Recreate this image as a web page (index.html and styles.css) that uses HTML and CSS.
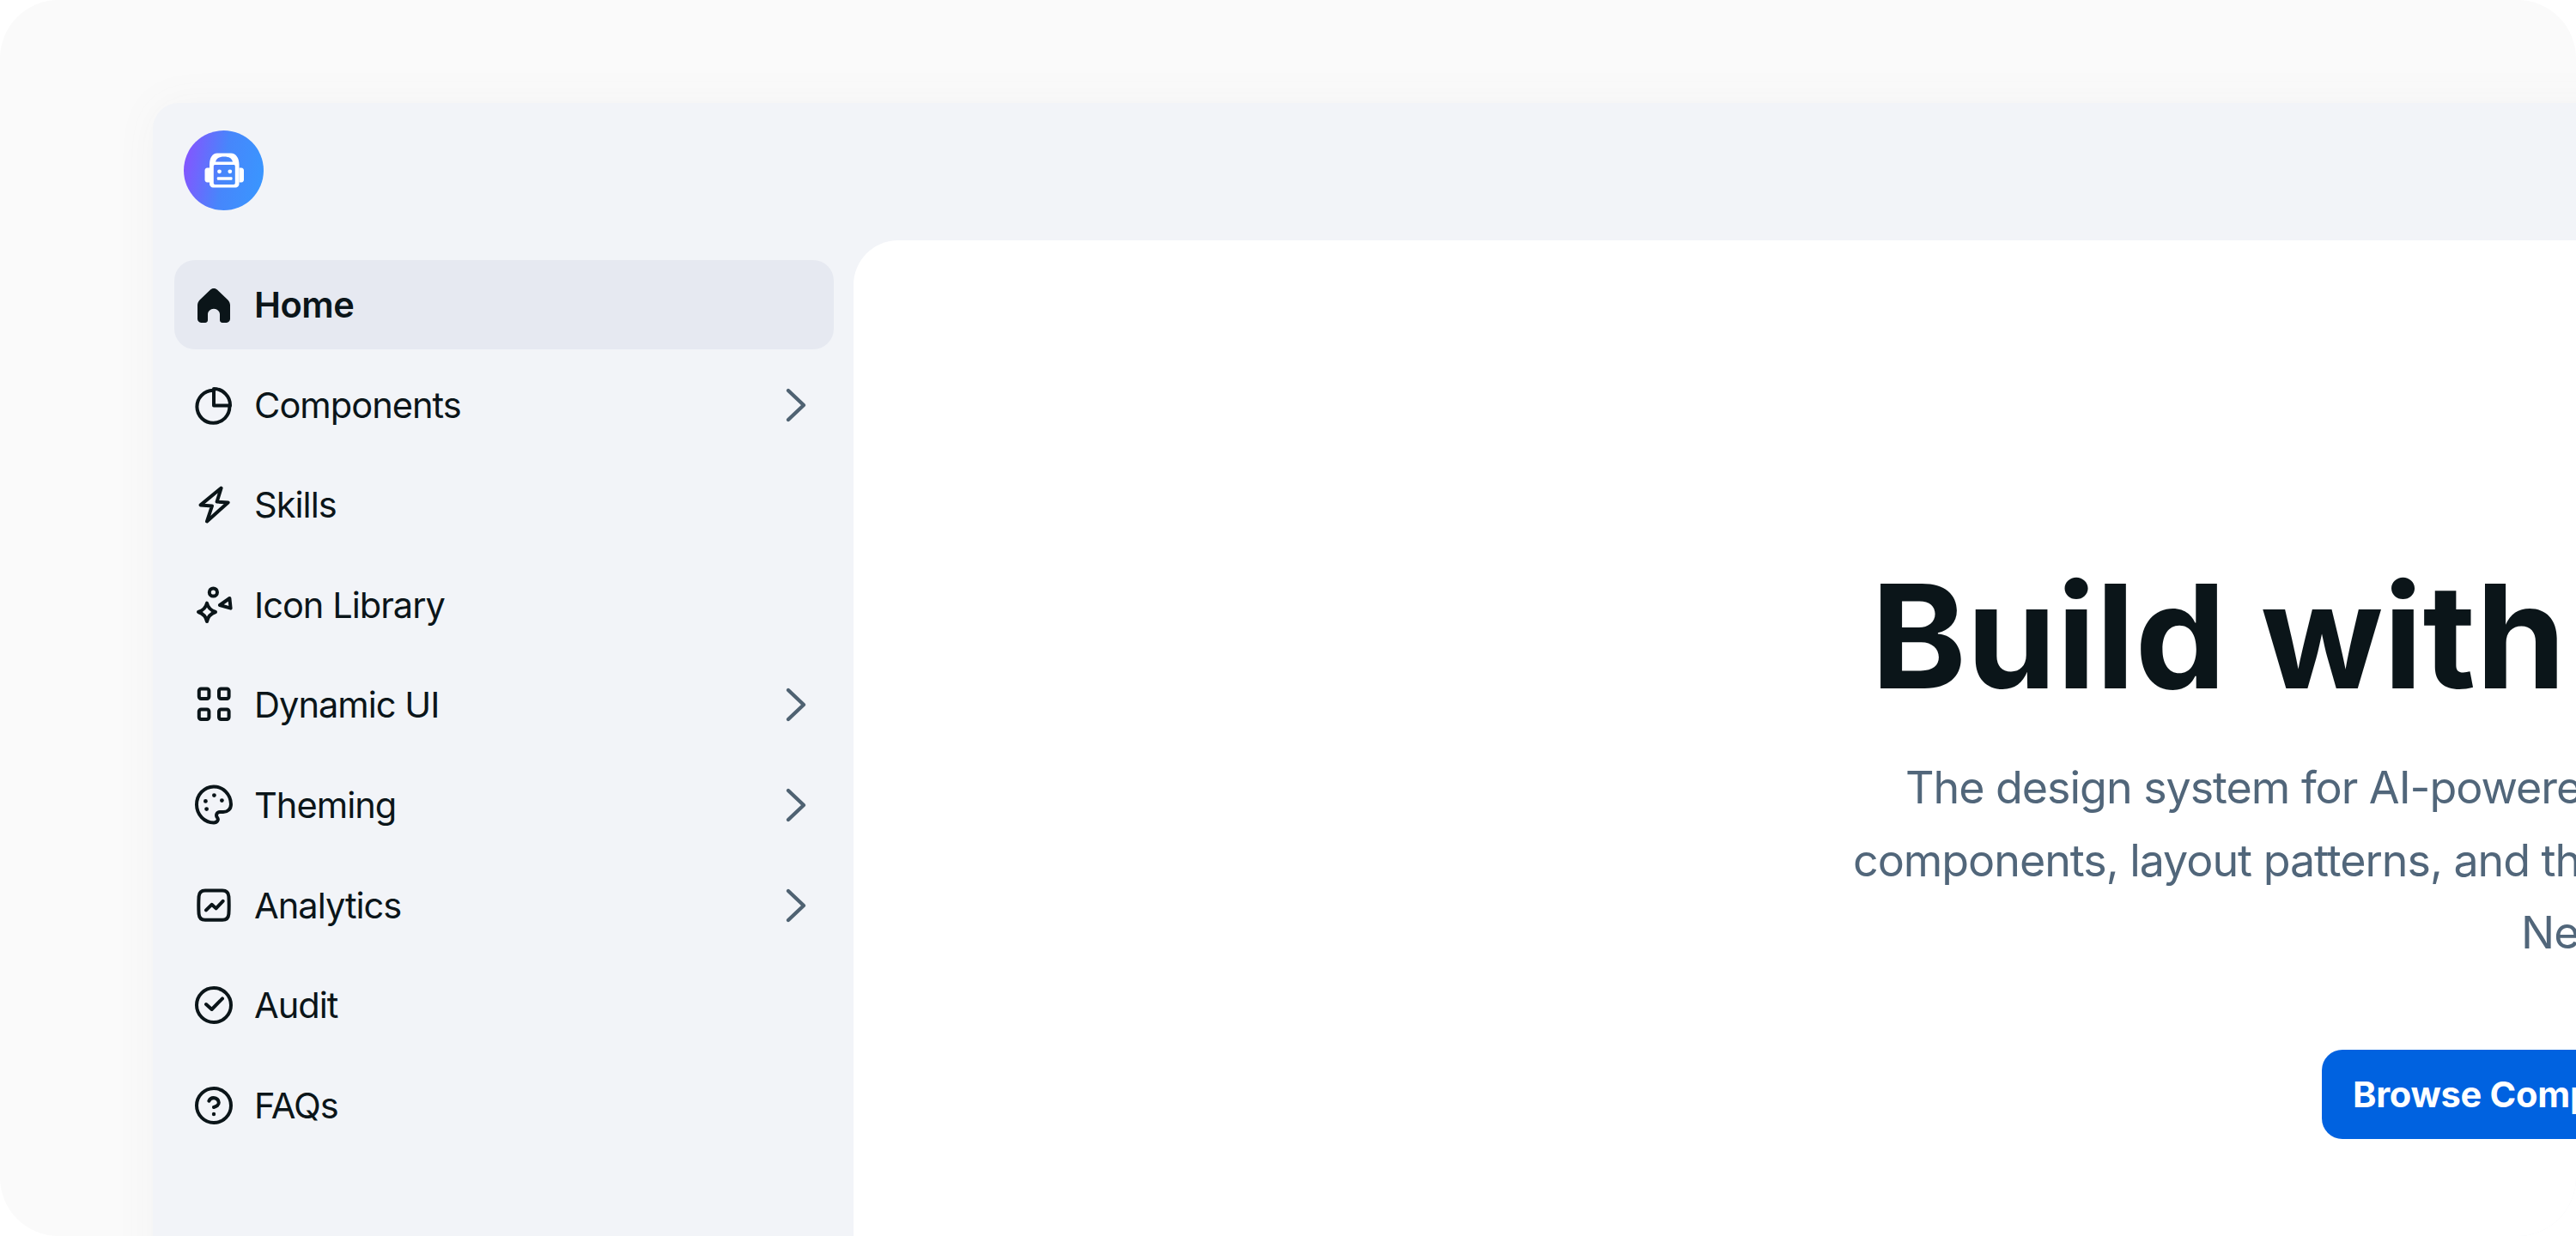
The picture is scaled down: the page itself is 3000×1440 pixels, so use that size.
FILE: index.html
```html
<!DOCTYPE html>
<html lang="en">
<head>
    <meta charset="UTF-8">
    <title>Design System Docs</title>
    <link rel="stylesheet" href="styles.css">
</head>
<body>
    <div class="frame">
        <div class="window">
            <aside class="sidebar">
                <div class="logo">
                    <svg width="48" height="48" viewBox="0 0 48 48">
                        <path fill="#fff" fill-rule="evenodd" d="M16 3.500h16c6 0 9.500 6 9.500 13v23c0 2-2 4-4 4H11c-2 0-4-2-4-4v-23c0-7 3-13 9-13zM14 13.500h20c-1-4-4-6-10-6s-9 2-10 6zM13.500 17c-1 0-1.700.7-1.700 1.700v19.600c0 1 .7 1.700 1.700 1.700h21.600c1 0 1.700-.7 1.700-1.700V18.700c0-1-.7-1.700-1.700-1.700z"/>
                        <path fill="#fff" d="M7 20.500v17H4.500c-2 0-3-1.500-3-3v-11c0-1.500 1-3 3-3zM41.500 20.500H44c2 0 3 1.500 3 3v11c0 1.500-1 3-3 3h-2.500z"/>
                        <circle fill="#fff" cx="18.500" cy="24.800" r="2.400"/>
                        <circle fill="#fff" cx="30.800" cy="24.800" r="2.400"/>
                        <rect fill="#fff" x="15.800" y="31.200" width="17.700" height="3.600" rx="1"/>
                    </svg>
                </div>
                <nav class="nav">
                    <a class="nav-item active">
                        <svg class="icon" viewBox="0 0 24 24"><path class="solid" d="M12 2.500c.8 0 1.500.3 2.100.9l6 5.700c.9.9 1.400 2 1.400 3.200v8c0 1.200-.9 2.200-2.100 2.200h-2.400c-.9 0-1.500-.7-1.500-1.500v-3.300c0-1.800-1.500-3.300-3.500-3.300s-3.500 1.500-3.500 3.300v3.300c0 .8-.6 1.500-1.500 1.500H4.600c-1.200 0-2.100-1-2.100-2.200v-8c0-1.200.5-2.300 1.400-3.200l6-5.700c.6-.6 1.300-.9 2.100-.9z"/></svg>
                        <span class="nav-label">Home</span>
                    </a>
                    <a class="nav-item">
                        <svg class="icon" viewBox="0 0 24 24"><path d="M11.500 3.400a9.500 9.500 0 1 0 9.700 9.400"/><path d="M12 2.500a9.500 9.500 0 0 1 9.500 9.800H12z"/></svg>
                        <span class="nav-label">Components</span>
                        <svg class="chevron" viewBox="0 0 24 24"><path d="M8 3.500 17 12l-9 8.500"/></svg>
                    </a>
                    <a class="nav-item">
                        <svg class="icon" viewBox="0 0 24 24"><path d="M16.300 2.300 4.300 12.200l6.700.5-3 9 12.300-11-6.500-.4z"/></svg>
                        <span class="nav-label">Skills</span>
                    </a>
                    <a class="nav-item">
                        <svg class="icon" viewBox="0 0 24 24"><circle cx="11.700" cy="4.500" r="2.300"/><path d="M21.200 8 15.500 12l6.300 1.800z"/><path d="M8 10.800c.6 2.600 2 4.200 5 5.200-3 1-4.400 2.600-5 5.500-.6-2.900-2-4.500-5-5.500 3-1 4.400-2.600 5-5.200z"/></svg>
                        <span class="nav-label">Icon Library</span>
                    </a>
                    <a class="nav-item">
                        <svg class="icon" viewBox="0 0 24 24"><rect x="3.400" y="2.700" width="5.800" height="5.800" rx="1.200"/><rect x="15" y="2.700" width="5.800" height="5.800" rx="1.200"/><rect x="3.400" y="14.700" width="5.800" height="5.800" rx="1.200"/><rect x="15" y="14.700" width="5.800" height="5.800" rx="1.200"/></svg>
                        <span class="nav-label">Dynamic UI</span>
                        <svg class="chevron" viewBox="0 0 24 24"><path d="M8 3.500 17 12l-9 8.500"/></svg>
                    </a>
                    <a class="nav-item">
                        <svg class="icon" viewBox="0 0 24 24"><path d="M12 22.200a10 10.500 0 1 1 10-10.700c0 2.800-2 4.500-4.500 4.500h-2c-1.800 0-2.500 2-1.500 3.200 1 1.300 0 3-2 3z"/><circle class="solid" cx="12.200" cy="6.300" r="1.200"/><circle class="solid" cx="16.700" cy="9.300" r="1.200"/><circle class="solid" cx="7.200" cy="9.700" r="1.200"/><circle class="solid" cx="7.800" cy="14.300" r="1.200"/></svg>
                        <span class="nav-label">Theming</span>
                        <svg class="chevron" viewBox="0 0 24 24"><path d="M8 3.500 17 12l-9 8.500"/></svg>
                    </a>
                    <a class="nav-item">
                        <svg class="icon" viewBox="0 0 24 24"><path d="M7 3.300h10c2.400 0 3.500 1 3.700 3.400.2 3.400.2 6.800 0 10.200-.2 2.400-1.300 3.500-3.700 3.500H7c-2.400 0-3.500-1.100-3.700-3.500-.2-3.400-.2-6.800 0-10.200C3.500 4.300 4.600 3.300 7 3.300z"/><path d="M7.500 14.700l3.300-3.300 2.500 2.300 4-4.300"/></svg>
                        <span class="nav-label">Analytics</span>
                        <svg class="chevron" viewBox="0 0 24 24"><path d="M8 3.500 17 12l-9 8.500"/></svg>
                    </a>
                    <a class="nav-item">
                        <svg class="icon" viewBox="0 0 24 24"><circle cx="12" cy="12" r="10"/><path d="M7.500 11.500l3.300 3 6.200-6.300"/></svg>
                        <span class="nav-label">Audit</span>
                    </a>
                    <a class="nav-item">
                        <svg class="icon" viewBox="0 0 24 24"><circle cx="12" cy="12" r="10"/><path d="M9.200 9.300a3 3 0 0 1 5.700 1c0 2-2.900 2.700-2.900 2.700"/><circle class="solid" cx="12" cy="17" r="1.100"/></svg>
                        <span class="nav-label">FAQs</span>
                    </a>
                </nav>
            </aside>
            <main class="content">
                <h1 class="hero-title">Build with</h1>
                <p class="hero-text">
                    <span class="hero-line first">The design system for AI-powered</span>
                    <span class="hero-line second">components, layout patterns, and the</span>
                    <span class="hero-line third">Next</span>
                </p>
                <a class="btn-primary">Browse Components</a>
            </main>
        </div>
    </div>
</body>
</html>
```

FILE: styles.css
```css
html, body {
    margin: 0;
    padding: 0;
    height: 100%;
    background-color: white;
    overflow: hidden;
}

body {
    font-family: Inter, 'Noto Sans', sans-serif;
    color: #0b1519;
}

.frame {
    width: 3000px;
    height: 1440px;
    box-sizing: border-box;
    padding: 120px 0 0 178px;
    background-color: #fafafa;
    border-radius: 68px;
    overflow: hidden;
}

.window {
    display: flex;
    width: 3400px;
    height: 1400px;
    background-color: #f2f4f8;
    border-radius: 30px 0 0 0;
    box-shadow: 0 0 50px rgba(120, 120, 110, 0.05);
}

.sidebar {
    width: 816px;
    flex-shrink: 0;
    box-sizing: border-box;
    padding: 32px 23px 0 25px;
}

.logo {
    width: 93px;
    height: 93px;
    margin-left: 11px;
    margin-bottom: 58px;
    display: flex;
    align-items: center;
    justify-content: center;
    border-radius: 50%;
    background: linear-gradient(100deg, #8c4fff 0%, #4786fb 50%, #3898ff 100%);
}

.nav {
    display: flex;
    flex-direction: column;
    gap: 12.6px;
}

.nav-item {
    height: 104px;
    display: flex;
    align-items: center;
    gap: 23px;
    padding: 0 21px 0 22px;
    border-radius: 24px;
    font-size: 41.6px;
    letter-spacing: -1px;
}

.nav-item.active {
    background-color: #e6e9f1;
    font-weight: 590;
    letter-spacing: -0.5px;
}

.nav-label {
    flex: 1;
}

.icon {
    width: 48px;
    height: 48px;
    flex-shrink: 0;
    fill: none;
    stroke: #0b1519;
    stroke-width: 2;
    stroke-linecap: round;
    stroke-linejoin: round;
}

.icon .solid {
    fill: #0b1519;
    stroke: none;
}

.chevron {
    width: 48px;
    height: 48px;
    flex-shrink: 0;
    fill: none;
    stroke: #4f6272;
    stroke-width: 2.2;
    stroke-linecap: round;
    stroke-linejoin: round;
}

.content {
    flex: 1;
    margin-top: 160px;
    padding-top: 370px;
    background-color: white;
    border-radius: 52px 0 0 0;
    white-space: nowrap;
}

.hero-title {
    margin: 0 0 0 1185px;
    font-size: 168px;
    line-height: 183px;
    font-weight: 670;
    letter-spacing: 0.2px;
}

.hero-text {
    margin: 43px 0 0 0;
    font-size: 52px;
    line-height: 84.5px;
    letter-spacing: -1.05px;
    color: #51667a;
}

.hero-line {
    display: block;
}

.hero-line.first {
    margin-left: 1225px;
}

.hero-line.second {
    margin-left: 1164px;
}

.hero-line.third {
    margin-left: 1942px;
}

.btn-primary {
    display: inline-block;
    margin: 93px 0 0 1710px;
    padding: 0 36px;
    height: 104px;
    line-height: 104px;
    font-size: 41.6px;
    font-weight: 700;
    letter-spacing: -0.3px;
    color: white;
    background-color: #0062e0;
    border-radius: 24px;
}
```
